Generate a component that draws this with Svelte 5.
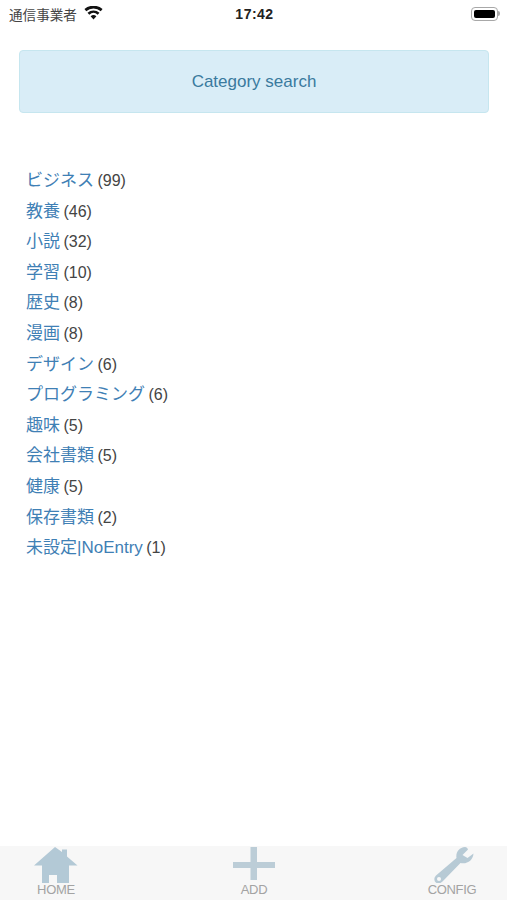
<script lang="ts">
  const categories = [
    { name: 'ビジネス', count: 99 },
    { name: '教養', count: 46 },
    { name: '小説', count: 32 },
    { name: '学習', count: 10 },
    { name: '歴史', count: 8 },
    { name: '漫画', count: 8 },
    { name: 'デザイン', count: 6 },
    { name: 'プログラミング', count: 6 },
    { name: '趣味', count: 5 },
    { name: '会社書類', count: 5 },
    { name: '健康', count: 5 },
    { name: '保存書類', count: 2 },
    { name: '未設定|NoEntry', count: 1 }
  ];
</script>

<div class="screen">
  <header class="status-bar">
    <div class="status-left">
      <span class="carrier">通信事業者</span>
      <svg class="wifi" width="19" height="14" viewBox="0 0 20 15">
        <path d="M10 14.500 6.900 10.900a4.700 4.700 0 0 1 6.200 0Z" fill="#111" />
        <path d="M5.500 9.300 3.600 7.100a9.700 9.700 0 0 1 12.800 0l-1.900 2.200a6.900 6.900 0 0 0-9 0Z" fill="#111" />
        <path d="M2.200 5.500.3 3.300a14.800 14.800 0 0 1 19.400 0l-1.900 2.200a12 12 0 0 0-15.600 0Z" fill="#111" />
      </svg>
    </div>
    <span class="time">17:42</span>
    <div class="battery">
      <div class="battery-body"><div class="battery-level"></div></div>
      <div class="battery-cap"></div>
    </div>
  </header>

  <main class="content">
    <div class="alert">Category search</div>

    <ul class="category-list">
      {#each categories as cat}
        <li><a href="#top">{cat.name}</a> ({cat.count})</li>
      {/each}
    </ul>
  </main>

  <nav class="tab-bar">
    <div class="tab">
      <svg width="44" height="36" viewBox="0 0 44 36">
        <path d="M21 0 28 5V2.500H33V9.500L43.500 18.500H35V36H23V28H15V36H8V18.500H0Z" fill="#b3c9d6" />
      </svg>
      <span>HOME</span>
    </div>
    <div class="tab">
      <svg width="44" height="36" viewBox="0 0 44 36">
        <path d="M18.500 0H25V15H43V21H25V33H18.500V21H1V15H18.500Z" fill="#bccdd7" />
      </svg>
      <span>ADD</span>
    </div>
    <div class="tab">
      <svg width="44" height="36" viewBox="0 0 44 36">
        <path d="M35 0C29 .5 25.500 5.500 26.500 11L6 28.500C3.500 31 4 34.500 6.500 36 9 37 11 36 12.500 34.500L30.500 16C37 17.500 43 13.500 43.500 6.500L37.500 11 32.500 8 38 2.500C37.500 1 36.500 0 35 0Z" fill="#b7cad5" />
        <circle cx="9" cy="32" r="2" fill="#f8f8f8" />
      </svg>
      <span>CONFIG</span>
    </div>
  </nav>
</div>

<style>
  :global(body) {
    margin: 0;
    background: #fff;
  }

  .screen {
    width: 507px;
    height: 900px;
    display: flex;
    flex-direction: column;
    font-family: "Liberation Sans", "Noto Sans CJK JP", sans-serif;
    overflow: hidden;
  }

  .status-bar {
    height: 27px;
    display: grid;
    grid-template-columns: 1fr auto 1fr;
    align-items: center;
    padding: 0 7px 0 9px;
    flex-shrink: 0;
  }

  .status-left {
    display: flex;
    align-items: center;
    gap: 7px;
  }

  .carrier {
    font-size: 13.600px;
    color: #444;
  }

  .wifi {
    margin-bottom: 1px;
  }

  .time {
    font-size: 14px;
    font-weight: 700;
    letter-spacing: 0.500px;
    color: #222;
  }

  .battery {
    justify-self: end;
    display: flex;
    align-items: center;
  }

  .battery-body {
    width: 27px;
    height: 14px;
    box-sizing: border-box;
    padding: 2px;
    border: 1px solid #a8a8a8;
    border-radius: 4px;
  }

  .battery-level {
    height: 100%;
    background: #000;
    border-radius: 2px;
  }

  .battery-cap {
    width: 2px;
    height: 5px;
    background: #aaa;
    border-radius: 0 2px 2px 0;
  }

  .content {
    flex: 1;
    padding: 23px 18px 0 19px;
  }

  .alert {
    height: 63px;
    box-sizing: border-box;
    padding-top: 1px;
    display: flex;
    align-items: center;
    justify-content: center;
    font-size: 17px;
    color: #3a7a9e;
    background: #d9edf7;
    border: 1px solid #c6e6ef;
    border-radius: 4px;
  }

  .category-list {
    list-style: none;
    margin: 0;
    padding: 53px 0 0 7px;
  }

  .category-list li {
    height: 30.600px;
    line-height: 30.600px;
    font-size: 16px;
    color: #444;
    white-space: nowrap;
  }

  .category-list a {
    font-size: 17px;
    margin-right: -1px;
    color: #3f80b5;
    text-decoration: none;
  }

  .tab-bar {
    height: 53px;
    flex-shrink: 0;
    display: flex;
    justify-content: space-between;
    padding: 1px 33px 0 34px;
    background: #f7f7f7;
  }

  .tab {
    width: 44px;
    display: flex;
    flex-direction: column;
    align-items: center;
  }

  .tab span {
    font-size: 13px;
    line-height: 14px;
    letter-spacing: -0.300px;
    color: #a3a3a3;
    white-space: nowrap;
  }
</style>
